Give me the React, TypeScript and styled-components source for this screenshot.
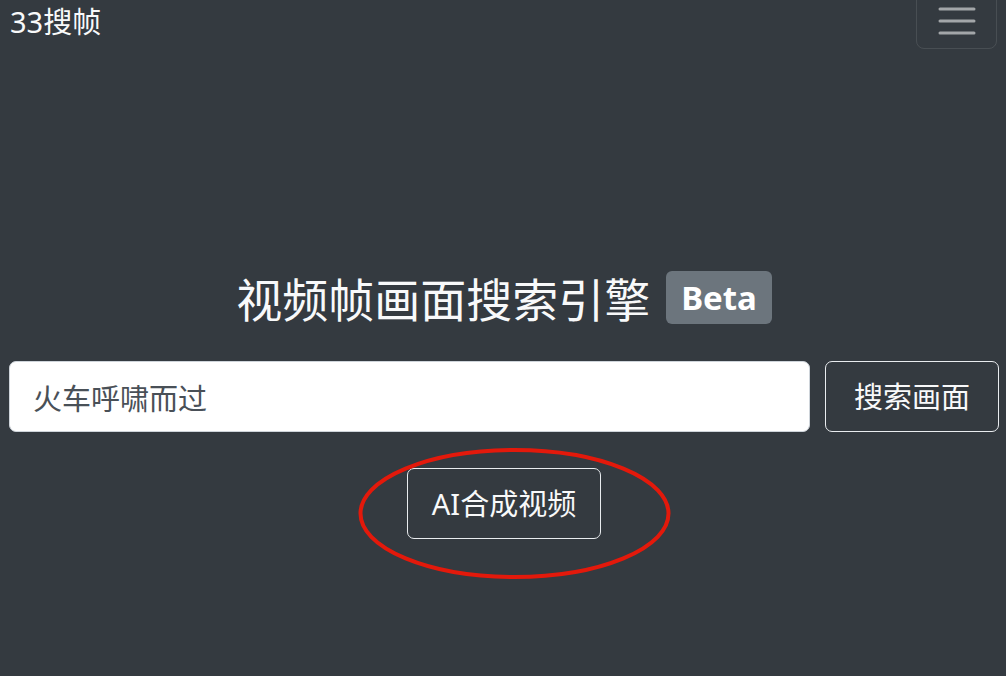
import React from "react";
import styled, { createGlobalStyle } from "styled-components";

const Global = createGlobalStyle`
  html, body { margin: 0; padding: 0; background: #343a40; }
  body { font-family: "Noto Sans", "Noto Sans CJK SC", sans-serif; color: #f8f9fa; overflow: hidden; }
  * { box-sizing: border-box; }
`;

const Page = styled.div`
  width: 1006px;
  height: 676px;
  display: flex;
  flex-direction: column;
`;

const Navbar = styled.nav`
  display: flex;
  justify-content: space-between;
  align-items: flex-start;
  height: 49px;
  padding: 0 9px 0 10px;
`;

const Brand = styled.a`
  font-family: "Noto Sans", "Noto Sans CJK SC", sans-serif;
  font-size: 29px;
  line-height: 44px;
  color: #f8f9fa;
  text-decoration: none;
`;

const Toggler = styled.button`
  width: 81px;
  height: 58px;
  margin-top: -9px;
  background: transparent;
  border: 1px solid rgba(255, 255, 255, 0.1);
  border-radius: 8px;
  display: flex;
  align-items: center;
  justify-content: center;
  padding: 0;
  padding-top: 2px;
`;

const Main = styled.main`
  display: flex;
  flex-direction: column;
  align-items: center;
  padding: 219px 7px 0 9px;
`;

const TitleRow = styled.div`
  display: flex;
  align-items: center;
  gap: 16px;
`;

const Title = styled.h1`
  margin: 0;
  font-family: "Noto Sans CJK SC", sans-serif;
  font-weight: 400;
  font-size: 46px;
  line-height: 58px;
  color: #f8f9fa;
`;

const Badge = styled.span`
  font-family: "Noto Sans", "Noto Sans CJK SC", sans-serif;
  font-weight: 700;
  font-size: 33px;
  line-height: 53px;
  height: 53px;
  padding: 0 15px;
  background: #6c757d;
  color: #fff;
  border-radius: 6px;
  display: inline-flex;
  align-items: center;
`;

const SearchRow = styled.div`
  display: flex;
  gap: 15px;
  width: 100%;
  margin-top: 35px;
`;

const Input = styled.input`
  flex: 1;
  height: 71px;
  border: 1px solid #ced4da;
  border-radius: 7px;
  background: #fff;
  font-family: "Noto Sans CJK SC", sans-serif;
  font-size: 29px;
  color: #495057;
  padding: 0 23px;
  outline: none;
  &::placeholder { color: #495057; }
`;

const OutlineButton = styled.button<{ $pad?: number }>`
  height: 71px;
  padding: 0 ${(p) => p.$pad ?? 28}px;
  background: transparent;
  border: 1px solid #e9ecef;
  border-radius: 7px;
  color: #f8f9fa;
  font-family: "Noto Sans", "Noto Sans CJK SC", sans-serif;
  font-size: 29px;
  line-height: 1;
  display: inline-flex;
  align-items: center;
  justify-content: center;
  white-space: nowrap;
`;

const AiWrap = styled.div`
  position: relative;
  display: flex;
  margin-top: 36px;
`;

const Ellipse = styled.svg`
  position: absolute;
  left: -49px;
  top: -21px;
  width: 313px;
  height: 133px;
  pointer-events: none;
  overflow: visible;
`;

export default function App() {
  return (
    <>
      <Global />
      <Page>
        <Navbar>
          <Brand href="#">33搜帧</Brand>
          <Toggler aria-label="menu">
            <svg width="44" height="44" viewBox="0 0 44 44">
              <g stroke="rgba(255,255,255,0.55)" strokeWidth="3" strokeLinecap="round">
                <line x1="5" y1="10" x2="39" y2="10" />
                <line x1="5" y1="22" x2="39" y2="22" />
                <line x1="5" y1="34" x2="39" y2="34" />
              </g>
            </svg>
          </Toggler>
        </Navbar>
        <Main>
          <TitleRow>
            <Title>视频帧画面搜索引擎</Title>
            <Badge>Beta</Badge>
          </TitleRow>
          <SearchRow>
            <Input placeholder="火车呼啸而过" />
            <OutlineButton>搜索画面</OutlineButton>
          </SearchRow>
          <AiWrap>
            <OutlineButton $pad={24}>AI合成视频</OutlineButton>
            <Ellipse viewBox="0 0 313 133">
              <ellipse cx="156.5" cy="66.5" rx="154" ry="63.5" fill="none" stroke="#e3190b" strokeWidth="4" />
            </Ellipse>
          </AiWrap>
        </Main>
      </Page>
    </>
  );
}
